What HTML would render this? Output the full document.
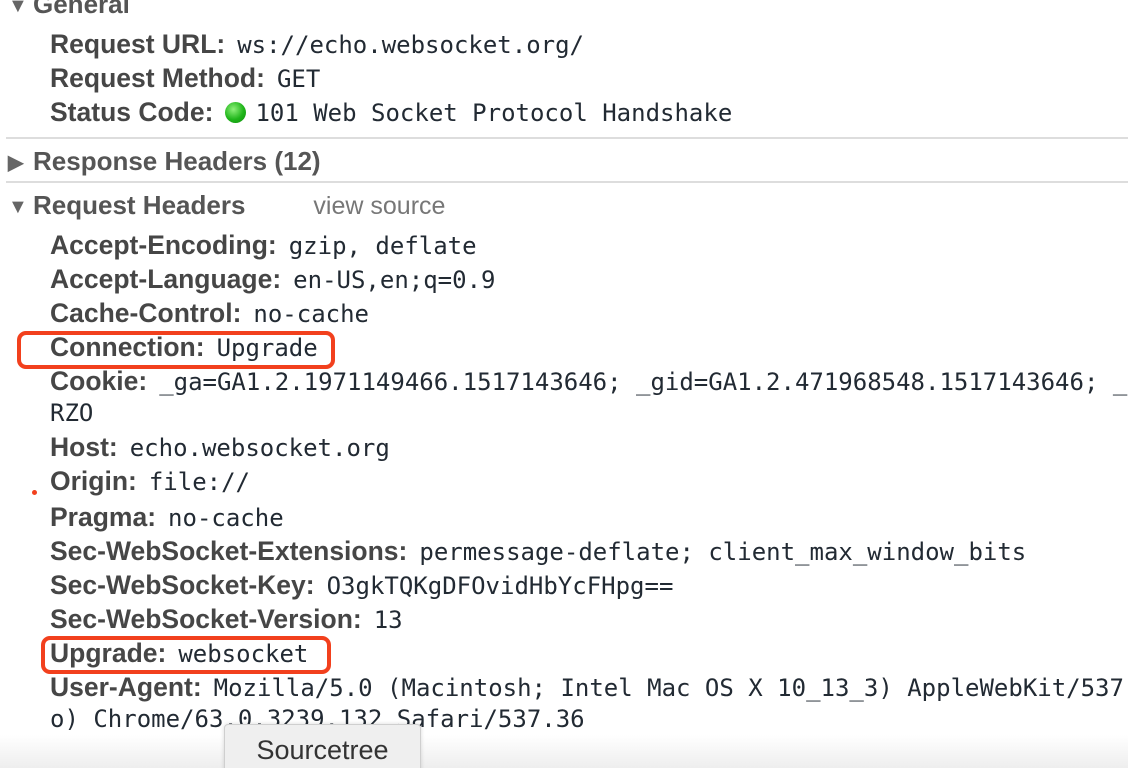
<!DOCTYPE html>
<html><head><meta charset="utf-8"><style>
html,body{margin:0;padding:0;background:#fff;width:1128px;height:768px;overflow:hidden;position:relative;font-family:"Liberation Sans",Arial,sans-serif}
.r{position:absolute;height:30px;line-height:30px;white-space:nowrap;left:50px}
.l{font-weight:bold;font-size:26.5px;color:#464646;margin-right:12px}
.v{font-family:"DejaVu Sans Mono","Liberation Mono",monospace;font-size:24px;color:#222a33}
.h{position:absolute;left:8px;height:30px;line-height:30px;font-size:26px;font-weight:bold;color:#555;white-space:nowrap}
.tri{display:inline-block;width:18px;font-size:20px;color:#666;vertical-align:1px;margin-right:7px}
.hr{position:absolute;left:6px;right:0;height:2px;background:#ddd}
.box{position:absolute;border:4px solid #f2401d;border-radius:9px}
</style></head><body>
<div class="h" style="top:-11px"><span class="tri">▼</span>General</div>
<div class="r" style="top:29px"><span class="l">Request URL:</span><span class="v">ws://echo.websocket.org/</span></div>
<div class="r" style="top:63px"><span class="l">Request Method:</span><span class="v">GET</span></div>
<div class="r" style="top:97px"><span class="l">Status Code:</span><span style="display:inline-block;width:21px;height:21px;border-radius:50%;background:radial-gradient(circle at 40% 35%,#8ef07a,#1fb51a 55%,#118c0e);vertical-align:-2px;margin-right:9px"></span><span class="v">101 Web Socket Protocol Handshake</span></div>
<div class="hr" style="top:137px"></div>
<div class="h" style="top:146px"><span class="tri">▶</span>Response Headers (12)</div>
<div class="hr" style="top:181px"></div>
<div class="h" style="top:190px"><span class="tri">▼</span>Request Headers<span style="font-weight:normal;color:#777;margin-left:68px;font-size:25px">view source</span></div>
<div class="r" style="top:230px"><span class="l">Accept-Encoding:</span><span class="v">gzip, deflate</span></div>
<div class="r" style="top:264px"><span class="l">Accept-Language:</span><span class="v">en-US,en;q=0.9</span></div>
<div class="r" style="top:298px"><span class="l">Cache-Control:</span><span class="v">no-cache</span></div>
<div class="r" style="top:332px"><span class="l">Connection:</span><span class="v">Upgrade</span></div>
<div class="r" style="top:366px"><span class="l">Cookie:</span><span class="v">_ga=GA1.2.1971149466.1517143646; _gid=GA1.2.471968548.1517143646; _</span></div>
<div class="r" style="top:398px"><span class="v">RZO</span></div>
<div class="r" style="top:432px"><span class="l">Host:</span><span class="v">echo.websocket.org</span></div>
<div class="r" style="top:466px"><span class="l">Origin:</span><span class="v">file://</span></div>
<div class="r" style="top:502px"><span class="l">Pragma:</span><span class="v">no-cache</span></div>
<div class="r" style="top:536px"><span class="l">Sec-WebSocket-Extensions:</span><span class="v">permessage-deflate; client_max_window_bits</span></div>
<div class="r" style="top:570px"><span class="l">Sec-WebSocket-Key:</span><span class="v">O3gkTQKgDFOvidHbYcFHpg==</span></div>
<div class="r" style="top:604px"><span class="l">Sec-WebSocket-Version:</span><span class="v">13</span></div>
<div class="r" style="top:638px"><span class="l">Upgrade:</span><span class="v">websocket</span></div>
<div class="r" style="top:672px"><span class="l">User-Agent:</span><span class="v">Mozilla/5.0 (Macintosh; Intel Mac OS X 10_13_3) AppleWebKit/537</span></div>
<div class="r" style="top:704px"><span class="v">o) Chrome/63.0.3239.132 Safari/537.36</span></div>
<div class="box" style="left:17px;top:331px;width:310px;height:30px"></div>
<div class="box" style="left:41px;top:636px;width:282px;height:30px"></div>
<div style="position:absolute;left:32px;top:490px;width:5px;height:5px;border-radius:50%;background:#f2401d"></div>
<div style="position:absolute;left:0;right:0;top:735px;bottom:0;background:linear-gradient(rgba(255,255,255,0.6),rgba(236,236,236,0.9))"></div>
<div style="position:absolute;left:224px;top:724px;width:195px;height:50px;background:#efefef;border:1px solid #cfcfcf;border-radius:4px;box-shadow:0 0 4px rgba(0,0,0,0.15);font-size:27px;color:#333;text-align:center;line-height:50px">Sourcetree</div>
</body></html>
